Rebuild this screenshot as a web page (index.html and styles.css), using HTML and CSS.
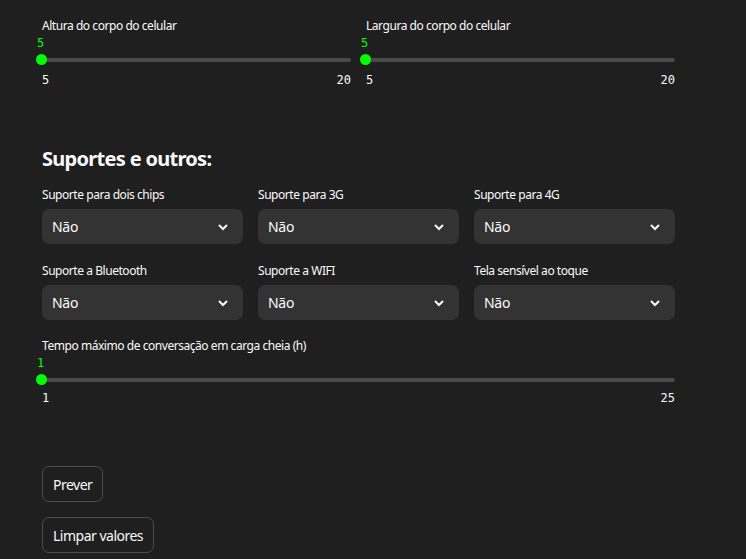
FILE: index.html
```html
<!DOCTYPE html>
<html lang="pt">
<head>
<meta charset="utf-8">
<link rel="stylesheet" href="styles.css">
</head>
<body>
<main class="main">
  <div class="cols2">
    <div class="slider">
      <div class="label">Altura do corpo do celular</div>
      <div class="track-wrap">
        <div class="value">5</div>
        <div class="track"><span class="thumb"></span></div>
      </div>
      <div class="ticks"><span>5</span><span>20</span></div>
    </div>
    <div class="slider">
      <div class="label">Largura do corpo do celular</div>
      <div class="track-wrap">
        <div class="value">5</div>
        <div class="track"><span class="thumb"></span></div>
      </div>
      <div class="ticks"><span>5</span><span>20</span></div>
    </div>
  </div>

  <h2 class="heading">Suportes e outros:</h2>

  <div class="cols3">
    <div class="field">
      <div class="label">Suporte para dois chips</div>
      <div class="select"><span>Não</span><svg class="chev" width="12" height="8" viewBox="0 0 12 8"><path d="M2 2l4 4 4-4" fill="none" stroke="#fafafa" stroke-width="2"/></svg></div>
    </div>
    <div class="field">
      <div class="label">Suporte para 3G</div>
      <div class="select"><span>Não</span><svg class="chev" width="12" height="8" viewBox="0 0 12 8"><path d="M2 2l4 4 4-4" fill="none" stroke="#fafafa" stroke-width="2"/></svg></div>
    </div>
    <div class="field">
      <div class="label">Suporte para 4G</div>
      <div class="select"><span>Não</span><svg class="chev" width="12" height="8" viewBox="0 0 12 8"><path d="M2 2l4 4 4-4" fill="none" stroke="#fafafa" stroke-width="2"/></svg></div>
    </div>
    <div class="field">
      <div class="label">Suporte a Bluetooth</div>
      <div class="select"><span>Não</span><svg class="chev" width="12" height="8" viewBox="0 0 12 8"><path d="M2 2l4 4 4-4" fill="none" stroke="#fafafa" stroke-width="2"/></svg></div>
    </div>
    <div class="field">
      <div class="label">Suporte a WIFI</div>
      <div class="select"><span>Não</span><svg class="chev" width="12" height="8" viewBox="0 0 12 8"><path d="M2 2l4 4 4-4" fill="none" stroke="#fafafa" stroke-width="2"/></svg></div>
    </div>
    <div class="field">
      <div class="label">Tela sensível ao toque</div>
      <div class="select"><span>Não</span><svg class="chev" width="12" height="8" viewBox="0 0 12 8"><path d="M2 2l4 4 4-4" fill="none" stroke="#fafafa" stroke-width="2"/></svg></div>
    </div>
  </div>

  <div class="slider wide">
    <div class="label">Tempo máximo de conversação em carga cheia (h)</div>
    <div class="track-wrap">
      <div class="value">1</div>
      <div class="track"><span class="thumb"></span></div>
    </div>
    <div class="ticks"><span>1</span><span>25</span></div>
  </div>

  <div class="buttons">
    <button class="btn">Prever</button>
    <button class="btn">Limpar valores</button>
  </div>
</main>
</body>
</html>
```
FILE: styles.css
```css
html, body {
  margin: 0;
  padding: 0;
  background: #1f1f1f;
  color: #fafafa;
  font-family: "Noto Sans", "Liberation Sans", sans-serif;
  overflow: hidden;
}
.main {
  width: 633px;
  margin-left: 42px;
  padding-top: 18px;
}
.label {
  font-size: 12px;
  line-height: 16px;
  height: 16px;
  letter-spacing: -0.45px;
  white-space: nowrap;
}
.cols2 {
  display: grid;
  grid-template-columns: 309px 309px;
  column-gap: 15px;
}
.slider {
  display: flex;
  flex-direction: column;
}
.track-wrap {
  position: relative;
  height: 34px;
}
.value {
  position: absolute;
  left: -5px;
  top: 2px;
  font-family: "DejaVu Sans Mono", monospace;
  font-size: 12px;
  line-height: 14px;
  color: #00ff00;
}
.track {
  position: absolute;
  left: 0;
  right: 0;
  top: 24px;
  height: 4px;
  border-radius: 2px;
  background: #4a4a4a;
}
.thumb {
  position: absolute;
  left: -6px;
  top: -4px;
  width: 11px;
  height: 11px;
  border-radius: 50%;
  background: #00ff00;
}
.ticks {
  display: flex;
  justify-content: space-between;
  font-family: "DejaVu Sans Mono", monospace;
  font-size: 12px;
  line-height: 14px;
  padding-top: 5px;
}
.heading {
  margin: 58px 0 0 0;
  font-size: 20px;
  line-height: 28px;
  font-weight: 700;
  letter-spacing: -0.7px;
}
.cols3 {
  display: grid;
  grid-template-columns: repeat(3, 201px);
  column-gap: 15px;
  row-gap: 19px;
  margin-top: 14px;
}
.field .label {
  margin-bottom: 6px;
}
.select {
  display: flex;
  align-items: center;
  justify-content: space-between;
  height: 35px;
  padding: 0 14px 0 10px;
  border-radius: 7px;
  background: #333333;
  font-size: 14px;
  letter-spacing: -0.3px;
}
.chev {
  display: block;
}
.wide {
  margin-top: 18px;
}
.wide .ticks {
  padding-top: 3px;
}
.buttons {
  display: flex;
  flex-direction: column;
  align-items: flex-start;
  gap: 15px;
  margin-top: 61px;
}
.btn {
  height: 36px;
  padding: 0 10px;
  border: 1px solid #4d4d4d;
  border-radius: 7px;
  background: #1f1f1f;
  color: #fafafa;
  font-family: "Noto Sans", "Liberation Sans", sans-serif;
  font-size: 14px;
  letter-spacing: -0.5px;
}
```
